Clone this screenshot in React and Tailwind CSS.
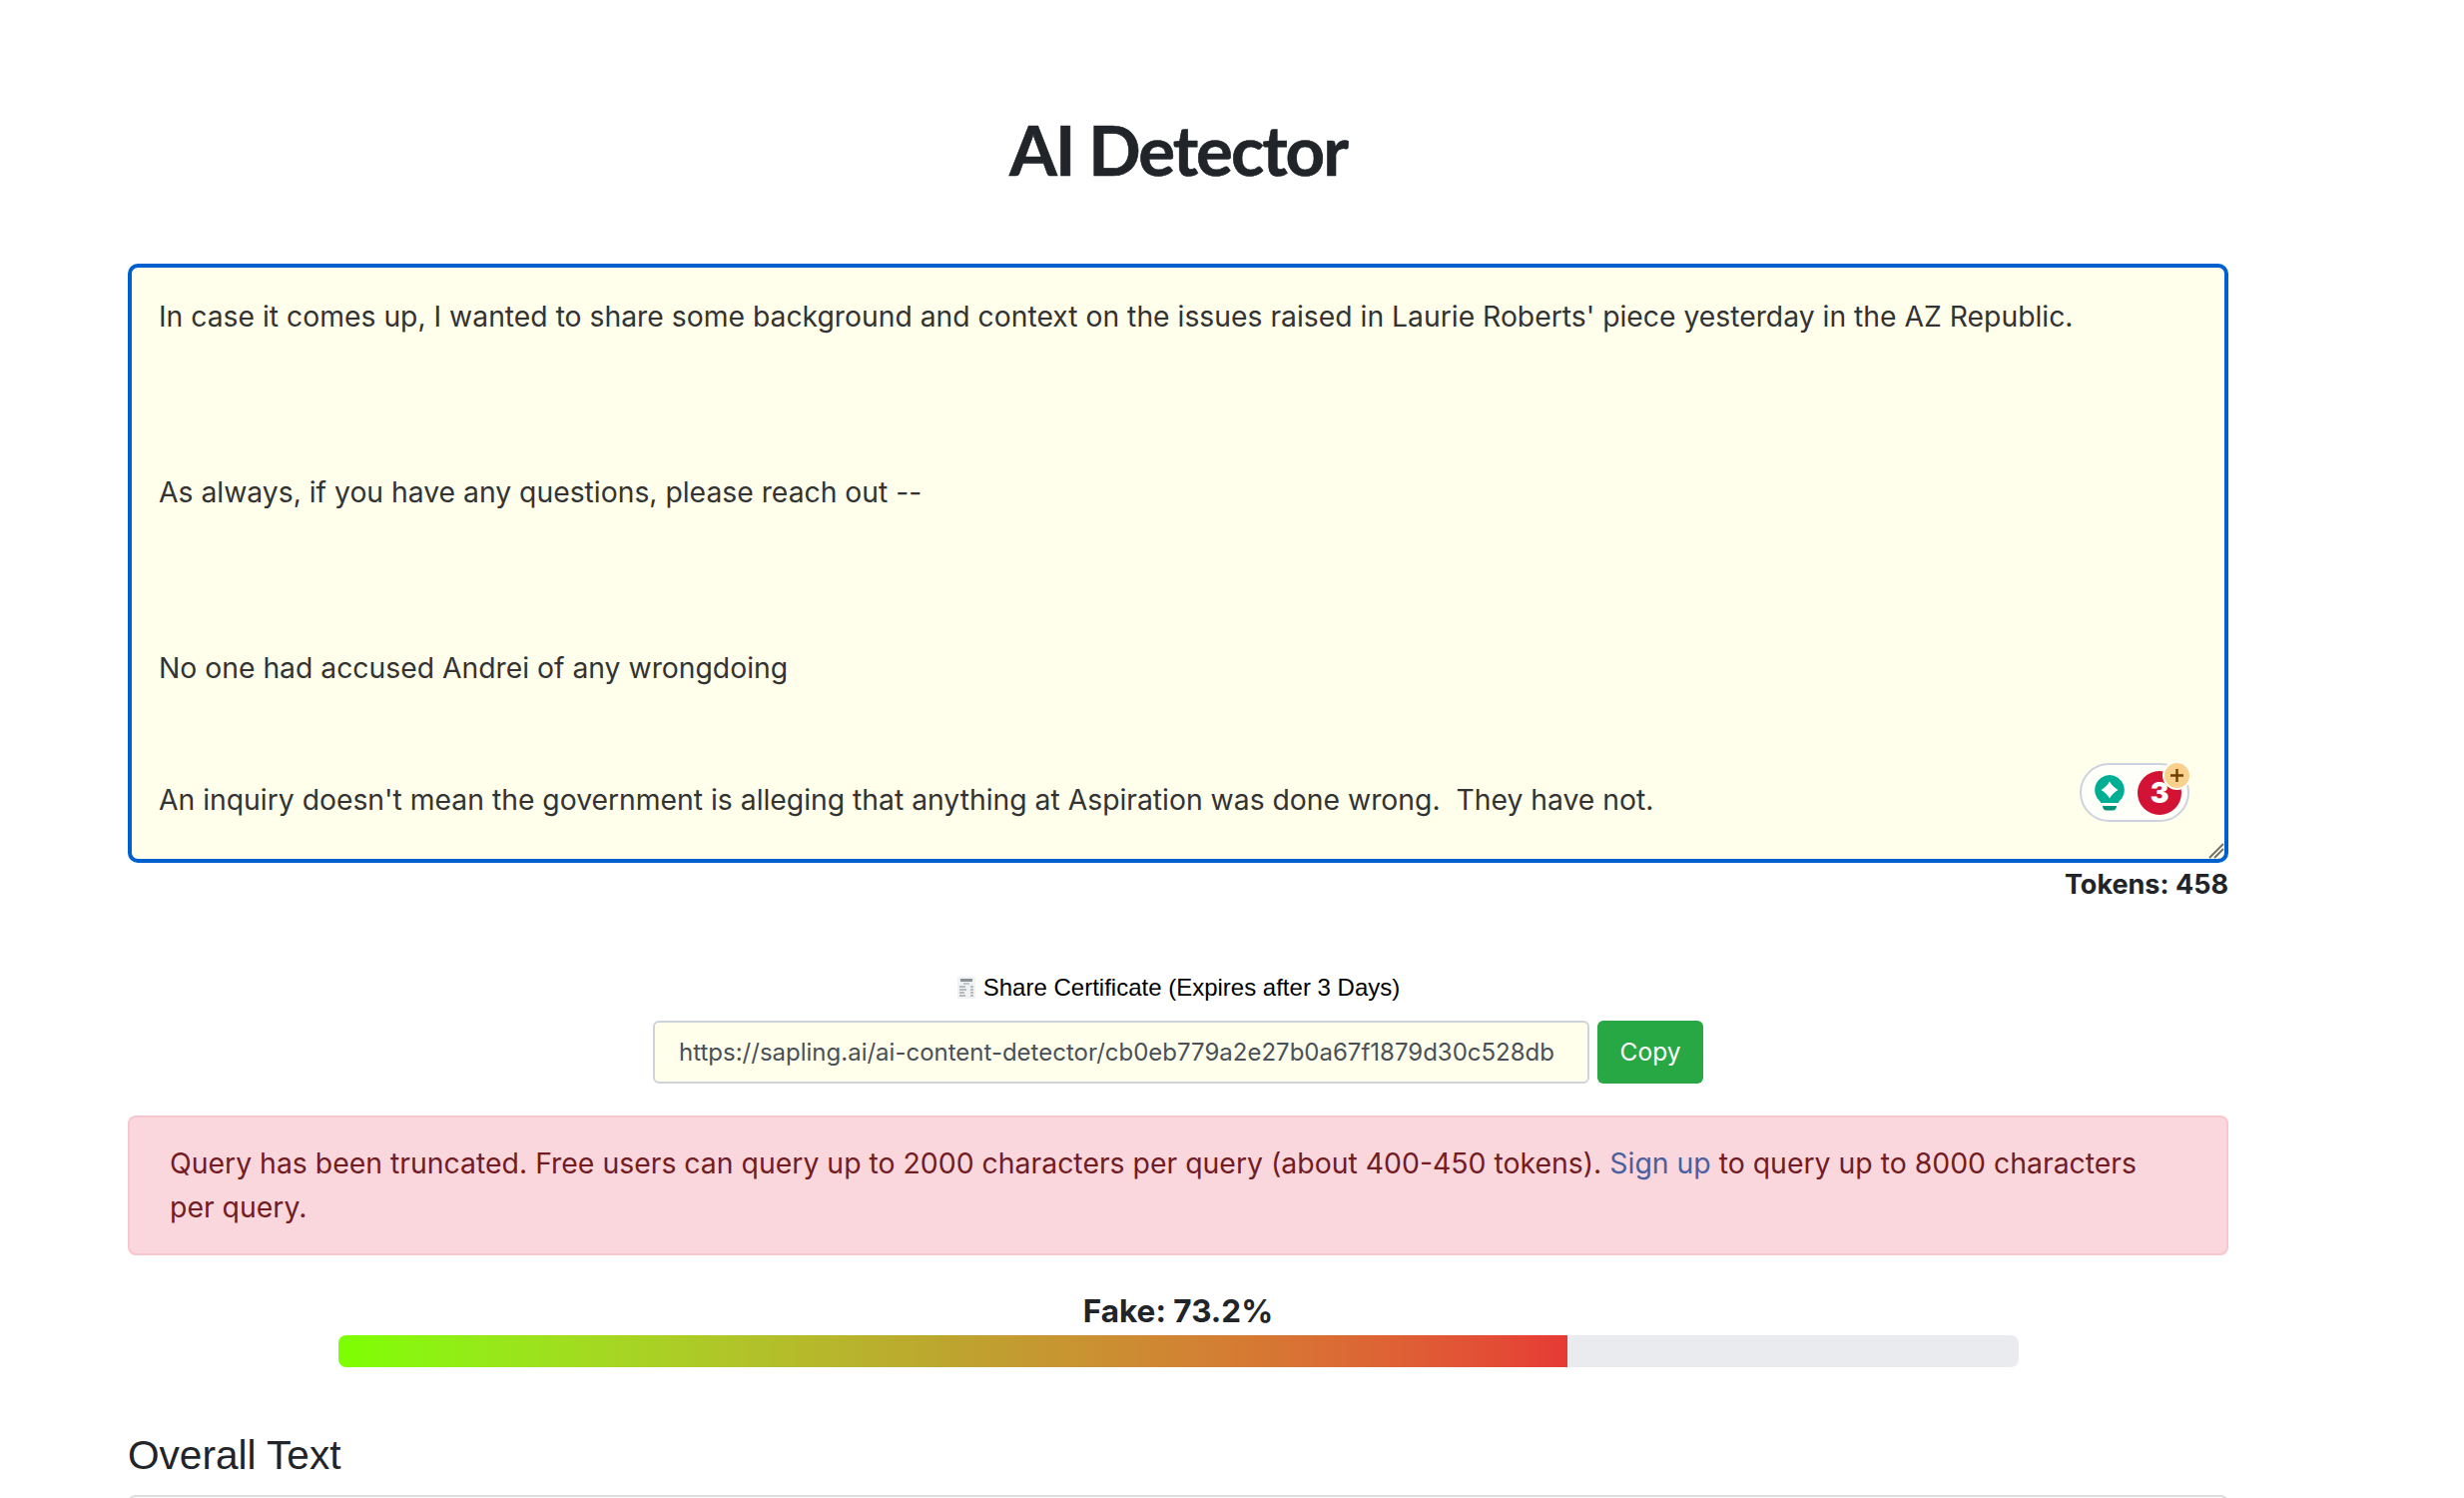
const essay = `In case it comes up, I wanted to share some background and context on the issues raised in Laurie Roberts' piece yesterday in the AZ Republic.



As always, if you have any questions, please reach out --



No one had accused Andrei of any wrongdoing


An inquiry doesn't mean the government is alleging that anything at Aspiration was done wrong.  They have not.`;

function ReceiptIcon() {
  return (
    <svg width="20" height="24" viewBox="0 0 20 24" className="shrink-0">
      <path d="M1 1h18v22H1z" fill="#f1f2f3" />
      <path d="M4 3h12v3H4z" fill="#8a8f94" />
      <path d="M7 8h6" stroke="#a5a9ad" strokeWidth="1.2" />
      <path d="M3 11h6M14 11h3M3 14h7M14 14h3M3 17h5M14 17h3M3 20h6M14 20h3" stroke="#a5a9ad" strokeWidth="1.3" />
    </svg>
  );
}

function GrammarWidget() {
  return (
    <div className="absolute right-[39px] bottom-[41px] w-[110px] h-[59px] rounded-full border-2 border-[#cdd2e0] bg-[#fffffa] flex items-center gap-[13px] pl-[13px]">
      <svg width="30" height="36" viewBox="0 0 30 36" className="shrink-0">
        <path d="M15 0a15 15 0 0 1 10 26c-1 1-1 2-1.500 2h-17c-.5 0-.5-1-1.500-2A15 15 0 0 1 15 0z" fill="#00ae94" />
        <path d="M15 6.500Q18 12 23.500 15 18 18 15 23.500 12 18 6.500 15 12 12 15 6.500z" fill="#fff" />
        <path d="M8 31h14c0 2.500-1.500 4.500-4 4.500h-6c-2.500 0-4-2-4-4.500z" fill="#00917b" />
      </svg>
      <div className="w-11 h-11 rounded-full bg-[#d31336] flex items-center justify-center text-white text-[28px] font-black leading-none font-['Inter',sans-serif]">
        3
      </div>
      <div className="absolute right-[-2px] top-[-2px] w-[25px] h-[25px] rounded-full bg-[#f9d18c] ring-2 ring-[#fffff5] flex items-center justify-center">
        <svg width="15" height="15" viewBox="0 0 15 15">
          <path d="M7.500 1v13M1 7.500h13" stroke="#6f3f00" strokeWidth="2.400" />
        </svg>
      </div>
    </div>
  );
}

export default function App() {
  return (
    <div className="h-screen overflow-hidden bg-white text-[#212529] font-['Inter',sans-serif]">
      <div className="ml-[128px] w-[2104px] flex flex-col">
        <h1 className="mt-[106px] text-center text-[69px] leading-[88px] font-bold tracking-[-2px] [-webkit-text-stroke:0.6px_#212529] font-['Lato',sans-serif]">
          AI Detector
        </h1>

        <div className="relative mt-[70px]">
          <textarea
            readOnly
            defaultValue={essay}
            className="block w-full h-[600px] rounded-[10px] border-4 border-[#0060cf] bg-[#ffffeb] pl-[27px] pr-[26px] pt-[27px] text-[28.3px] leading-[44px] text-[#333] outline-none overflow-hidden resize-none"
          />
          <svg width="16" height="16" viewBox="0 0 16 16" className="absolute right-[4px] bottom-[4px] pointer-events-none">
            <path d="M1 15L15 1M6 15l9-9" stroke="#6f6f6a" strokeWidth="1.800" />
          </svg>
          <GrammarWidget />
        </div>
        <div className="mt-[5px] text-right text-[27px] leading-[33px] font-bold">Tokens: 458</div>

        <div className="mt-[71px] flex items-center justify-center gap-[7px] text-[24px] leading-[32px] text-black font-['Liberation_Sans',sans-serif]">
          <ReceiptIcon />
          Share Certificate (Expires after 3 Days)
        </div>

        <div className="mt-[17px] flex justify-center gap-2">
          <input
            readOnly
            value="https://sapling.ai/ai-content-detector/cb0eb779a2e27b0a67f1879d30c528db"
            className="w-[938px] h-[63px] rounded-[6px] border-2 border-[#ced4da] bg-[#ffffeb] px-6 text-[24px] text-[#495057] outline-none"
          />
          <button className="w-[106px] h-[63px] rounded-[6px] bg-[#28a745] text-white text-[24.5px]">Copy</button>
        </div>

        <div className="mt-[32px] rounded-[8px] border-2 border-[#f8c6cc] bg-[#fad7dc] px-[40px] py-[24px] text-[28.4px] leading-[44px] text-[#721c24]">
          Query has been truncated. Free users can query up to 2000 characters per query (about 400-450 tokens).{" "}
          <a className="text-[#4b5f9e]">Sign up</a> to query up to 8000 characters per query.
        </div>

        <div className="mt-[35px] text-center text-[31.5px] leading-[42px] font-bold">Fake: 73.2%</div>
        <div className="mt-[3px] mx-auto w-[1683px] h-8 rounded-[8px] bg-[#eaebef] overflow-hidden">
          <div className="w-[73.2%] h-full bg-gradient-to-r from-[#7cff00] via-[#bda42f] to-[#e63a35]" />
        </div>

        <h2 className="mt-[60px] text-[40.6px] leading-[56px] font-['Liberation_Sans',sans-serif]">Overall Text</h2>
        <div className="mt-[12px] h-24 rounded-[8px] border-2 border-[#dddddd]" />
      </div>
    </div>
  );
}
